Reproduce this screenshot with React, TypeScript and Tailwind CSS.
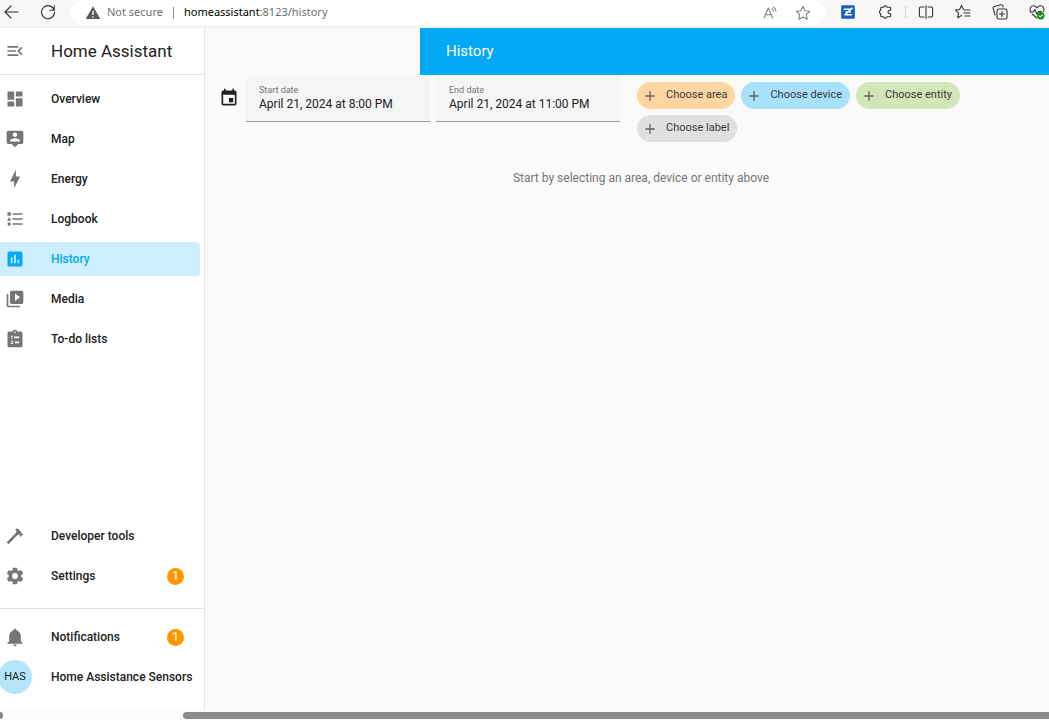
import React, { useState } from "react";

const ICONS = {
  menuOpen:
    "M21,15.61L19.59,17L14.58,12L19.59,7L21,8.39L17.44,12L21,15.61M3,6H16V8H3V6M3,13V11H13V13H3M3,18V16H16V18H3Z",
  dashboard: "M13,3V9H21V3M13,21H21V11H13M3,21H11V15H3M3,13H11V3H3V13Z",
  map: "M20,2H4A2,2 0 0,0 2,4V16A2,2 0 0,0 4,18H8L12,22L16,18H20A2,2 0 0,0 22,16V4A2,2 0 0,0 20,2M12,4.3C13.5,4.3 14.7,5.5 14.7,7C14.7,8.5 13.5,9.7 12,9.7C10.5,9.7 9.3,8.5 9.3,7C9.3,5.5 10.5,4.3 12,4.3M18,15H6V14.1C6,12.1 10,11 12,11C14,11 18,12.1 18,14.1V15Z",
  energy: "M11 15H6L13 1V9H18L11 23V15Z",
  logbook:
    "M5,9.5L7.5,14H2.5L5,9.5M3,4H7V8H3V4M5,20A2,2 0 0,0 7,18A2,2 0 0,0 5,16A2,2 0 0,0 3,18A2,2 0 0,0 5,20M9,5V7H21V5H9M9,19H21V17H9V19M9,13H21V11H9V13Z",
  history:
    "M5,3A2,2 0 0,0 3,5V19A2,2 0 0,0 5,21H19A2,2 0 0,0 21,19V5A2,2 0 0,0 19,3H5M7,10H9V17H7V10M11,7H13V17H11V7M15,13H17V17H15V13Z",
  media:
    "M4,6H2V20A2,2 0 0,0 4,22H18V20H4V6M20,2H8A2,2 0 0,0 6,4V16A2,2 0 0,0 8,18H20A2,2 0 0,0 22,16V4A2,2 0 0,0 20,2M12,14.5V5.5L18,10L12,14.5Z",
  todo: "M19,3H14.82C14.4,1.84 13.3,1 12,1C10.7,1 9.6,1.84 9.18,3H5A2,2 0 0,0 3,5V20A2,2 0 0,0 5,22H19A2,2 0 0,0 21,20V5A2,2 0 0,0 19,3M12,3A1,1 0 0,1 13,4A1,1 0 0,1 12,5A1,1 0 0,1 11,4A1,1 0 0,1 12,3M7,8H9V12H8V9H7V8M10,17V18H7V17.08L9,15H7V14H9.25A0.75,0.75 0 0,1 10,14.75C10,14.95 9.92,15.14 9.79,15.27L8.12,17H10M11,9H17V11H11V9M12,15H17V17H12V15Z",
  tools:
    "M2,19.63L13.43,8.2L12.72,7.5L14.14,6.07L12,3.89C13.2,2.7 15.09,2.7 16.27,3.89L19.87,7.5L18.45,8.91H21.29L22,9.62L18.45,13.21L17.74,12.5V9.62L16.27,11.04L15.56,10.33L4.13,21.76L2,19.63Z",
  settings:
    "M12,15.5A3.5,3.5 0 0,1 8.5,12A3.5,3.5 0 0,1 12,8.5A3.5,3.5 0 0,1 15.5,12A3.5,3.5 0 0,1 12,15.5M19.43,12.97C19.47,12.65 19.5,12.33 19.5,12C19.5,11.67 19.47,11.34 19.43,11L21.54,9.37C21.73,9.22 21.78,8.95 21.66,8.73L19.66,5.27C19.54,5.05 19.27,4.96 19.05,5.05L16.56,6.05C16.04,5.66 15.5,5.32 14.87,5.07L14.5,2.42C14.46,2.18 14.25,2 14,2H10C9.75,2 9.54,2.18 9.5,2.42L9.13,5.07C8.5,5.32 7.96,5.66 7.44,6.05L4.95,5.05C4.73,4.96 4.46,5.05 4.34,5.27L2.34,8.73C2.21,8.95 2.27,9.22 2.46,9.37L4.57,11C4.53,11.34 4.5,11.67 4.5,12C4.5,12.33 4.53,12.65 4.57,12.97L2.46,14.63C2.27,14.78 2.21,15.05 2.34,15.27L4.34,18.73C4.46,18.95 4.73,19.03 4.95,18.95L7.44,17.94C7.96,18.34 8.5,18.68 9.13,18.93L9.5,21.58C9.54,21.82 9.75,22 10,22H14C14.25,22 14.46,21.82 14.5,21.58L14.87,18.93C15.5,18.67 16.04,18.34 16.56,17.94L19.05,18.95C19.27,19.03 19.54,18.95 19.66,18.73L21.66,15.27C21.78,15.05 21.73,14.78 21.54,14.63L19.43,12.97Z",
  bell: "M21,19V20H3V19L5,17V11C5,7.9 7.03,5.17 10,4.29C10,4.19 10,4.1 10,4A2,2 0 0,1 12,2A2,2 0 0,1 14,4C14,4.1 14,4.19 14,4.29C16.97,5.17 19,7.9 19,11V17L21,19M14,21A2,2 0 0,1 12,23A2,2 0 0,1 10,21",
  calendar:
    "M19,19H5V8H19M16,1V3H8V1H6V3H5C3.89,3 3,3.89 3,5V19A2,2 0 0,0 5,21H19A2,2 0 0,0 21,19V5C21,3.89 20.1,3 19,3H18V1M17,12H12V17H17V12Z",
  plus: "M19,13H13V19H11V13H5V11H11V5H13V11H19V13Z",
  alert: "M12,2L1,21H23M11,9H13V15H11M11,17H13V19H11",
};

type IconName = keyof typeof ICONS;

function Icon({ name, className }: { name: IconName; className: string }) {
  return (
    <svg viewBox="0 0 24 24" fill="currentColor" fillRule="evenodd" aria-hidden="true" className={className}>
      <path d={ICONS[name]} />
    </svg>
  );
}

function ToolbarButton({ label, children }: { label: string; children: React.ReactNode }) {
  return (
    <button type="button" aria-label={label} className="shrink-0">
      <svg
        viewBox="0 0 16 16"
        fill="none"
        stroke="currentColor"
        strokeWidth="1.1"
        strokeLinecap="round"
        strokeLinejoin="round"
        className="size-4"
      >
        {children}
      </svg>
    </button>
  );
}

function BrowserBar() {
  return (
    <header className="flex h-7 shrink-0 items-start border-b border-[#efefef] bg-[#f7f7f7] text-[#333333]">
      <div className="flex h-6 w-[71px] shrink-0 items-center gap-5 pl-1">
        <ToolbarButton label="Back">
          <path d="M14 8H1M7 2L1 8l6 6" />
        </ToolbarButton>
        <ToolbarButton label="Refresh">
          <path d="M14.2 6.2A6.5 6.5 0 1 0 14.5 8M14.3 1.8v4.4H9.9" />
        </ToolbarButton>
      </div>
      <div className="flex h-[25px] min-w-0 flex-1 items-center rounded-full bg-white pr-[14px] pl-[14px] font-['Noto_Sans','Open_Sans',sans-serif] text-[11px] text-[#6f6f6f]">
        <Icon name="alert" className="size-4 shrink-0 text-[#5c5c5c]" />
        <span className="ml-1.5 whitespace-nowrap">Not secure</span>
        <span className="mx-[10px] h-3 w-px bg-[#8d8d8d]" />
        <span className="min-w-0 flex-1 truncate">
          <span className="text-black">homeassistant</span>:8123/history
        </span>
        <div className="flex items-center gap-[17px] text-[#808080]">
          <ToolbarButton label="Read aloud">
            <path d="M2 13L6.3 3l4.3 10M3.5 9.7h5.6M10 3.8c.9.6 1.3 1.4 1.4 2.4M11.6 2c1.5.9 2.2 2.3 2.3 4.2" />
          </ToolbarButton>
          <ToolbarButton label="Add to favorites">
            <path d="M8 1.4l2 4.3 4.7.6-3.4 3.2.9 4.7L8 11.9l-4.2 2.3.9-4.7L1.3 6.3 6 5.7z" />
          </ToolbarButton>
        </div>
      </div>
      <div className="flex h-6 shrink-0 items-center pr-1 pl-[15px]">
        <div className="flex items-center gap-[21px]">
          <ToolbarButton label="Zotero extension">
            <rect x="1.2" y="1.2" width="13.6" height="13.6" rx="1.2" fill="#1760bd" stroke="none" />
            <path d="M4.2 5.2H11L5 10.8h6.500M6 8.100h4.500M11 5.200l1.200-1" stroke="#ffffff" strokeWidth="1.5" />
          </ToolbarButton>
          <ToolbarButton label="Extensions">
            <path d="M4.500 3.200h2a1.900 1.900 0 0 1 3.600 0h2.700a.8.8 0 0 1 .8.8v2.200h-.8a1.800 1.800 0 0 0 0 3.600h.8V12a.8.8 0 0 1-.8.800h-2.700a1.900 1.900 0 0 1-3.600 0h-2a.8.8 0 0 1-.8-.8V9.800a1.900 1.900 0 0 1 0-3.600V4a.8.8 0 0 1 .8-.8z" />
          </ToolbarButton>
        </div>
        <span className="mx-3 h-3 w-px bg-[#cfcfcf]" />
        <div className="flex items-center gap-[21px]">
          <ToolbarButton label="Split screen">
            <path d="M6 3H2.600A1.200 1.200 0 0 0 1.400 4.200v7.600A1.200 1.200 0 0 0 2.600 13H6M10 3h3.400a1.200 1.200 0 0 1 1.200 1.200v7.600A1.200 1.200 0 0 1 13.400 13H10M8 1.500v13" />
          </ToolbarButton>
          <ToolbarButton label="Favorites">
            <path d="M8.500 5.500L6.500 1.500l-1.900 4-4.100.6 3 3-.8 4.600 3.800-2.100M9.500 6h5.500M9 9h6M10 12h5" />
          </ToolbarButton>
          <ToolbarButton label="Collections">
            <rect x="5" y="5" width="10" height="10" rx="1.8" />
            <path d="M10 7.500v5M7.500 10h5M3 11L1.200 4.500a1.600 1.600 0 0 1 1.100-2l6.600-1.700a1.600 1.600 0 0 1 1.900 1.100l.3 1.100" />
          </ToolbarButton>
          <ToolbarButton label="Browser essentials">
            <path d="M1.500 7.500C.2 4.200 2 1.800 4.400 1.800c1.700 0 2.700.9 3.600 2 .9-1.100 1.900-2 3.600-2 2.400 0 4.200 2.400 2.900 5.700M1 8h3.200l1.600-2.500L8 10l1.500-2.500h3M3 10l5 4" />
            <circle cx="11.800" cy="11.800" r="3.700" fill="#0f8a17" stroke="none" />
            <path d="M10.200 11.900l1.200 1.100 2-2.200" stroke="#ffffff" />
          </ToolbarButton>
        </div>
      </div>
    </header>
  );
}

interface NavEntry {
  label: string;
  icon: IconName;
  active?: boolean;
  badge?: number;
}

const MAIN_NAV: NavEntry[] = [
  { label: "Overview", icon: "dashboard" },
  { label: "Map", icon: "map" },
  { label: "Energy", icon: "energy" },
  { label: "Logbook", icon: "logbook" },
  { label: "History", icon: "history", active: true },
  { label: "Media", icon: "media" },
  { label: "To-do lists", icon: "todo" },
];

const TOOL_NAV: NavEntry[] = [
  { label: "Developer tools", icon: "tools" },
  { label: "Settings", icon: "settings", badge: 1 },
];

function NavItem({ label, icon, active, badge }: NavEntry) {
  return (
    <a
      href="#"
      aria-current={active ? "page" : undefined}
      className={
        active
          ? "mr-1 flex h-[34px] items-center rounded-r bg-[#cceeff] pr-4 pl-[5px] text-[#03a9f4]"
          : "mr-1 flex h-[34px] items-center rounded-r pr-4 pl-[5px] text-[#212121]"
      }
    >
      <Icon name={icon} className={active ? "size-5 shrink-0" : "size-5 shrink-0 text-[#757575]"} />
      <span className="ml-[26px] flex-1 font-medium whitespace-nowrap">{label}</span>
      {badge !== undefined && (
        <span className="flex size-[17px] items-center justify-center rounded-full bg-[#ff9800] text-xs text-white">
          {badge}
        </span>
      )}
    </a>
  );
}

function Sidebar() {
  return (
    <aside className="flex w-[205px] shrink-0 flex-col border-r border-[#e4e4e4] bg-white text-xs">
      <div className="flex h-[47px] items-center border-b border-[#e4e4e4] pl-[5px]">
        <button type="button" aria-label="Collapse sidebar" className="text-[#757575]">
          <Icon name="menuOpen" className="size-5" />
        </button>
        <span className="ml-[26px] text-[17px] text-[#212121]">Home Assistant</span>
      </div>
      <nav aria-label="Main" className="flex flex-1 flex-col gap-1.5 pt-[7px]">
        {MAIN_NAV.map((entry) => (
          <NavItem key={entry.label} {...entry} />
        ))}
      </nav>
      <nav aria-label="Administration" className="flex flex-col gap-1.5 border-b border-[#e0e0e0] pb-[15px]">
        {TOOL_NAV.map((entry) => (
          <NavItem key={entry.label} {...entry} />
        ))}
      </nav>
      <nav aria-label="Account" className="flex flex-col gap-1.5 pt-[11px] pb-4">
        <NavItem label="Notifications" icon="bell" badge={1} />
        <a href="#" className="flex h-[34px] items-center text-[#212121]">
          <span className="-ml-0.5 flex size-[34px] shrink-0 items-center justify-center rounded-full bg-[#b3e5fc] text-[11px]">
            HAS
          </span>
          <span className="ml-[19px] font-medium whitespace-nowrap">Home Assistance Sensors</span>
        </a>
      </nav>
    </aside>
  );
}

function DateField({ id, label, initial }: { id: string; label: string; initial: string }) {
  const [value, setValue] = useState(initial);
  return (
    <div className="flex h-[46px] w-[184px] flex-col border-b border-[#9a9a9a] bg-[#f5f5f5] px-[13px] pt-2">
      <label htmlFor={id} className="text-[9px] leading-3 text-[#757575]">
        {label}
      </label>
      <input
        id={id}
        type="text"
        value={value}
        onChange={(event) => setValue(event.target.value)}
        className="w-full bg-transparent text-xs leading-4 text-[#212121] outline-none"
      />
    </div>
  );
}

const CHIPS = [
  { label: "Choose area", color: "bg-[#ffd6a1]" },
  { label: "Choose device", color: "bg-[#a8e1fc]" },
  { label: "Choose entity", color: "bg-[#d2e7b9]" },
  { label: "Choose label", color: "bg-[#e0e0e0]" },
];

function HistoryPanel() {
  return (
    <main className="flex min-w-0 flex-1 flex-col bg-[#fafafa]">
      <div className="ml-[215px] flex h-[47px] items-center bg-[#03a9f4] pl-[26px]">
        <h1 className="text-[15px] text-white">History</h1>
      </div>
      <section aria-label="Filters" className="flex items-start pt-px pr-4 pl-[14px]">
        <Icon name="calendar" className="mt-3 size-5 shrink-0 text-[#212121]" />
        <div className="ml-[7px] flex gap-1.5">
          <DateField id="start-date" label="Start date" initial="April 21, 2024 at 8:00 PM" />
          <DateField id="end-date" label="End date" initial="April 21, 2024 at 11:00 PM" />
        </div>
        <div className="ml-[17px] flex min-w-0 flex-1 flex-wrap gap-1.5 pt-1.5">
          {CHIPS.map((chip) => (
            <button
              key={chip.label}
              type="button"
              className={`${chip.color} flex h-[27px] items-center gap-2 rounded-full pr-2 pl-[5px] text-[11px] text-[#3a3a3a]`}
            >
              <Icon name="plus" className="size-4 text-[#606060]" />
              <span>{chip.label}</span>
            </button>
          ))}
        </div>
      </section>
      <p className="mt-7 pl-7 text-center text-xs text-[#757575]">
        Start by selecting an area, device or entity above
      </p>
    </main>
  );
}

export default function App() {
  return (
    <div className="flex min-h-screen flex-col bg-[#fafafa] font-['Roboto',sans-serif]">
      <BrowserBar />
      <div className="flex flex-1">
        <Sidebar />
        <HistoryPanel />
      </div>
      <div className="flex h-[10px] items-center justify-between bg-[#fcfcfc]" aria-hidden="true">
        <span className="h-[7px] w-[3px] rounded-r-full bg-[#8a8a8a]" />
        <span className="ml-[180px] h-[7px] flex-1 rounded-l-full bg-[#8a8a8a]" />
      </div>
    </div>
  );
}
